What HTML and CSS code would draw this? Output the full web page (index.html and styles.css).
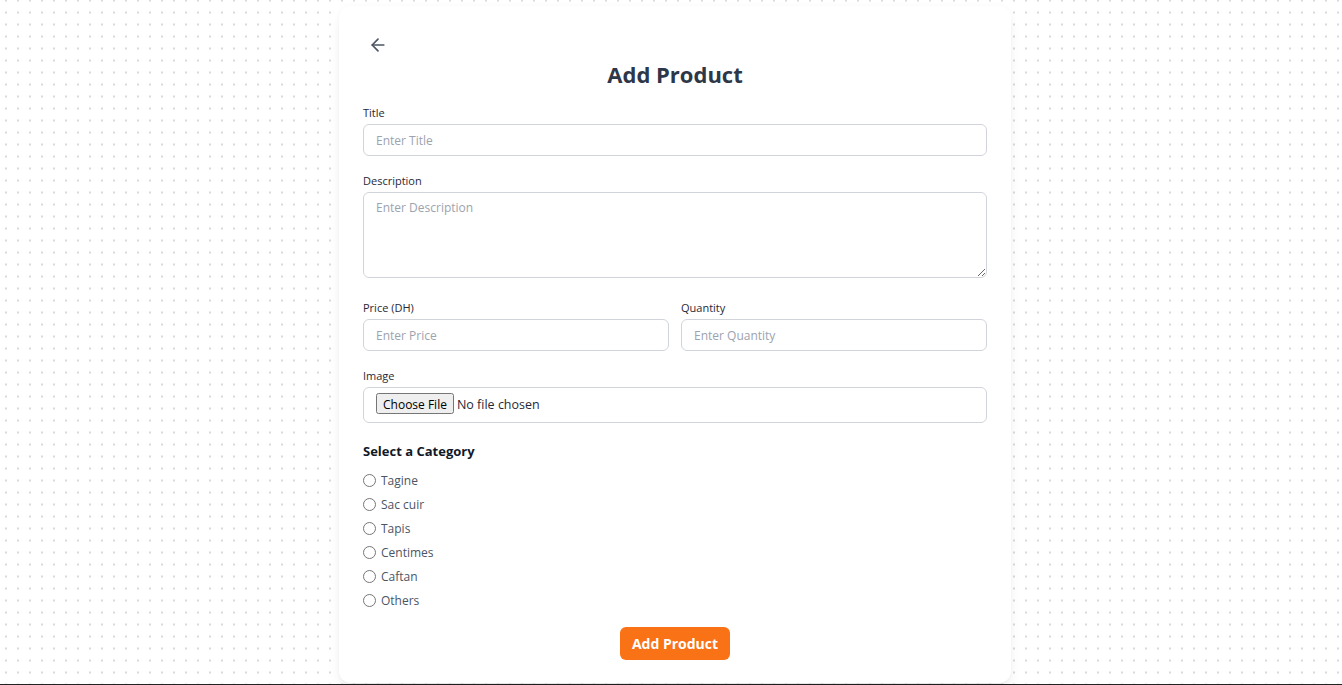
FILE: index.html
```html
<!DOCTYPE html>
<html lang="en">
<head>
<meta charset="utf-8">
<title>Add Product</title>
<link rel="stylesheet" href="styles.css">
</head>
<body>
<main class="page">
  <section class="card">
    <button class="back" type="button" aria-label="Back">
      <svg width="20" height="20" viewBox="0 0 24 24" fill="none" stroke="currentColor" stroke-width="2" stroke-linecap="round" stroke-linejoin="round"><path d="m12 19-7-7 7-7"/><path d="M19 12H5"/></svg>
    </button>
    <h1 class="heading">Add Product</h1>
    <form class="form">
      <div class="field">
        <label class="label">Title</label>
        <input class="input" type="text" placeholder="Enter Title">
      </div>
      <div class="field field-gap">
        <label class="label">Description</label>
        <textarea class="input textarea" placeholder="Enter Description"></textarea>
      </div>
      <div class="row">
        <div class="field">
          <label class="label">Price (DH)</label>
          <input class="input" type="text" placeholder="Enter Price">
        </div>
        <div class="field">
          <label class="label">Quantity</label>
          <input class="input" type="text" placeholder="Enter Quantity">
        </div>
      </div>
      <div class="field">
        <label class="label">Image</label>
        <input class="input file" type="file">
      </div>
      <div class="category">
        <h2 class="cat-title">Select a Category</h2>
        <ul class="options">
          <li class="option"><input type="radio" name="cat" class="radio"><span>Tagine</span></li>
          <li class="option"><input type="radio" name="cat" class="radio"><span>Sac cuir</span></li>
          <li class="option"><input type="radio" name="cat" class="radio"><span>Tapis</span></li>
          <li class="option"><input type="radio" name="cat" class="radio"><span>Centimes</span></li>
          <li class="option"><input type="radio" name="cat" class="radio"><span>Caftan</span></li>
          <li class="option"><input type="radio" name="cat" class="radio"><span>Others</span></li>
        </ul>
      </div>
      <div class="actions">
        <button class="submit" type="button">Add Product</button>
      </div>
    </form>
  </section>
</main>
<footer class="footer"></footer>
</body>
</html>
```

FILE: styles.css
```css
* { box-sizing: border-box; }
html, body { margin: 0; padding: 0; }
body {
  font-family: "Open Sans", "Noto Sans", sans-serif;
  background-color: #ffffff;
  background-image: radial-gradient(circle, #d9d9d9 0.9px, transparent 1.3px);
  background-size: 12px 12px;
  background-position: 0px -5.5px;
  color: #1f2937;
}
.page {
  display: flex;
  justify-content: center;
  padding: 6px 0 0 8px;
}
.card {
  width: 672px;
  background: #fff;
  border-radius: 12px;
  box-shadow: 0 10px 15px -3px rgba(0,0,0,0.07), 0 4px 6px -4px rgba(0,0,0,0.07), 0 0 6px rgba(0,0,0,0.03);
  padding: 24px 24px 23px;
}
.back {
  display: flex;
  border: 0;
  background: transparent;
  color: #4b5563;
  padding: 5px;
  cursor: pointer;
}
.heading {
  margin: -2px 0 15px;
  text-align: center;
  font-size: 22px;
  line-height: 32px;
  font-weight: 700;
  color: #2d3748;
}
.form { display: flex; flex-direction: column; gap: 18px; }
.field { display: flex; flex-direction: column; gap: 3px; min-width: 0; }
.label { font-size: 11px; line-height: 16px; color: #1f2937; font-weight: 500; }
.input {
  width: 100%;
  height: 32px;
  border: 1px solid #d1d5db;
  border-radius: 6px;
  padding: 0 12px;
  font-family: inherit;
  font-size: 12px;
  color: #1f2937;
  background: #fff;
  outline: none;
}
.input::placeholder { color: #9ca3af; }
.textarea { height: 86px; padding: 6px 12px; resize: vertical; display: block; }
.field-gap { margin-top: -1px; margin-bottom: 4px; }
.row { display: grid; grid-template-columns: 1fr 1fr; gap: 12px; margin-bottom: -1px; }
.file { height: 36px; padding: 0 12px; font-size: 12.5px; display: flex; align-items: center; line-height: 34px; }
.file::file-selector-button {
  font-family: inherit;
  font-size: 12px;
  padding: 1px 5px;
  margin-right: 3px;
  height: 21px;
  line-height: 17px;
}
.category { margin-top: 0; }
.cat-title { margin: 0 0 11px; font-size: 13px; line-height: 20px; font-weight: 700; color: #111827; }
.options { list-style: none; margin: 0; padding: 0; display: flex; flex-direction: column; gap: 8px; }
.option { display: flex; align-items: center; gap: 5px; height: 16px; font-size: 12px; color: #4b5563; }
.radio { margin: 0; width: 13px; height: 13px; }
.actions { display: flex; justify-content: center; margin-top: 1px; }
.submit {
  background: #f97316;
  color: #fff;
  border: 0;
  border-radius: 6px;
  height: 33px;
  padding: 0 12px;
  font-family: inherit;
  font-size: 14px;
  font-weight: 700;
  cursor: pointer;
}
.footer { height: 40px; background: #222; margin-top: 1px; }
```
